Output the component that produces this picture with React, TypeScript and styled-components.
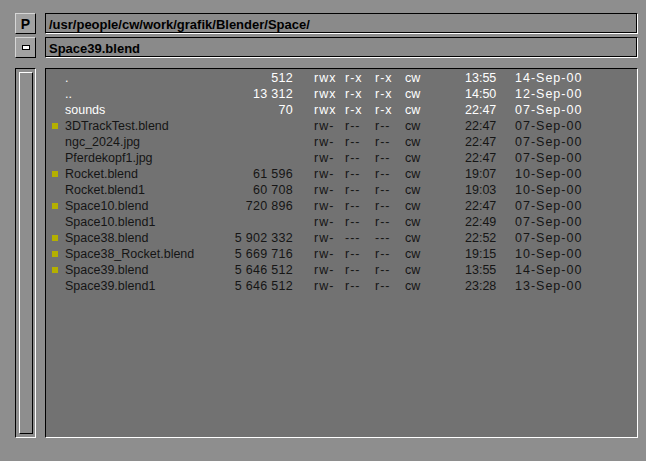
import styled, { createGlobalStyle } from "styled-components";

interface Entry {
  name: string;
  size: string;
  perms: [string, string, string];
  owner: string;
  time: string;
  date: string;
  dir?: boolean;
  blend?: boolean;
}

const entries: Entry[] = [
  { name: ".", size: "512", perms: ["rwx", "r-x", "r-x"], owner: "cw", time: "13:55", date: "14-Sep-00", dir: true },
  { name: "..", size: "13 312", perms: ["rwx", "r-x", "r-x"], owner: "cw", time: "14:50", date: "12-Sep-00", dir: true },
  { name: "sounds", size: "70", perms: ["rwx", "r-x", "r-x"], owner: "cw", time: "22:47", date: "07-Sep-00", dir: true },
  { name: "3DTrackTest.blend", size: "", perms: ["rw-", "r--", "r--"], owner: "cw", time: "22:47", date: "07-Sep-00", blend: true },
  { name: "ngc_2024.jpg", size: "", perms: ["rw-", "r--", "r--"], owner: "cw", time: "22:47", date: "07-Sep-00" },
  { name: "Pferdekopf1.jpg", size: "", perms: ["rw-", "r--", "r--"], owner: "cw", time: "22:47", date: "07-Sep-00" },
  { name: "Rocket.blend", size: "61 596", perms: ["rw-", "r--", "r--"], owner: "cw", time: "19:07", date: "10-Sep-00", blend: true },
  { name: "Rocket.blend1", size: "60 708", perms: ["rw-", "r--", "r--"], owner: "cw", time: "19:03", date: "10-Sep-00" },
  { name: "Space10.blend", size: "720 896", perms: ["rw-", "r--", "r--"], owner: "cw", time: "22:47", date: "07-Sep-00", blend: true },
  { name: "Space10.blend1", size: "", perms: ["rw-", "r--", "r--"], owner: "cw", time: "22:49", date: "07-Sep-00" },
  { name: "Space38.blend", size: "5 902 332", perms: ["rw-", "---", "---"], owner: "cw", time: "22:52", date: "07-Sep-00", blend: true },
  { name: "Space38_Rocket.blend", size: "5 669 716", perms: ["rw-", "r--", "r--"], owner: "cw", time: "19:15", date: "10-Sep-00", blend: true },
  { name: "Space39.blend", size: "5 646 512", perms: ["rw-", "r--", "r--"], owner: "cw", time: "13:55", date: "14-Sep-00", blend: true },
  { name: "Space39.blend1", size: "5 646 512", perms: ["rw-", "r--", "r--"], owner: "cw", time: "23:28", date: "13-Sep-00" },
];

export default function App() {
  return (
    <>
      <GlobalStyle />
      <Screen>
        <ToolButton>P</ToolButton>
        <PathField>/usr/people/cw/work/grafik/Blender/Space/</PathField>
        <ToolButton>
          <Dash />
        </ToolButton>
        <PathField>Space39.blend</PathField>
        <ScrollGroove>
          <ScrollThumb />
        </ScrollGroove>
        <FileList>
          {entries.map((e) => (
            <Row key={e.name} $dir={e.dir}>
              <MarkerCell>{e.blend && <Marker />}</MarkerCell>
              <span>{e.name}</span>
              <Size>{e.size}</Size>
              {e.perms.map((p, i) => (
                <Spaced key={i}>{p}</Spaced>
              ))}
              <span>{e.owner}</span>
              <span>{e.time}</span>
              <Spaced>{e.date}</Spaced>
            </Row>
          ))}
        </FileList>
      </Screen>
    </>
  );
}

const GlobalStyle = createGlobalStyle`
  * { box-sizing: border-box; }
  html, body { margin: 0; padding: 0; background: #8e8e8e; }
`;

const Screen = styled.div`
  height: 100vh;
  padding: 13px 8px 23px 15px;
  display: grid;
  grid-template-columns: 21px 1fr;
  grid-template-rows: 21px 21px 1fr;
  column-gap: 9px;
  row-gap: 3px;
  font-family: "Liberation Sans", Arial, sans-serif;
`;

const ToolButton = styled.div`
  display: flex;
  align-items: center;
  justify-content: center;
  background: #a2a2a2;
  border: 1px solid;
  border-color: #d6d6d6 #000 #000 #d6d6d6;
  font-weight: bold;
  font-size: 14px;
  color: #000;
`;

const Dash = styled.span`
  width: 8px;
  height: 5px;
  background: #fff;
  border: 1px solid #000;
`;

const PathField = styled.div`
  background: #8a8a8a;
  border: 1px solid;
  border-color: #000 #fff #fff #000;
  box-shadow: inset -1px -1px 0 #000;
  padding: 1px 0 0 3px;
  display: flex;
  align-items: center;
  font-weight: bold;
  font-size: 13px;
  color: #000;
`;

const ScrollGroove = styled.div`
  margin-top: 7px;
  border: 1px solid;
  border-color: #000 #fff #fff #000;
  padding: 3px 2px 3px 3px;
  display: flex;
`;

const ScrollThumb = styled.div`
  flex: 1;
  border: 1px solid;
  border-color: #fff #000 #000 #fff;
`;

const FileList = styled.div`
  margin-top: 7px;
  background: #727272;
  border: 1px solid;
  border-color: #000 #fff #fff #000;
  padding: 1px 0 0 6px;
  overflow: hidden;
`;

const Row = styled.div<{ $dir?: boolean }>`
  display: grid;
  grid-template-columns: 13px 135px 114px 31px 30px 30px 60px 50px 1fr;
  height: 16px;
  line-height: 16px;
  font-size: 12.5px;
  white-space: nowrap;
  color: ${(p) => (p.$dir ? "#ffffff" : "#151515")};
`;

const MarkerCell = styled.div`
  display: flex;
  align-items: center;
`;

const Marker = styled.span`
  width: 6px;
  height: 6px;
  background: #b4b000;
`;

const Size = styled.span`
  text-align: right;
  padding-right: 21px;
  letter-spacing: 0.3px;
`;

const Spaced = styled.span`
  letter-spacing: 1px;
`;
